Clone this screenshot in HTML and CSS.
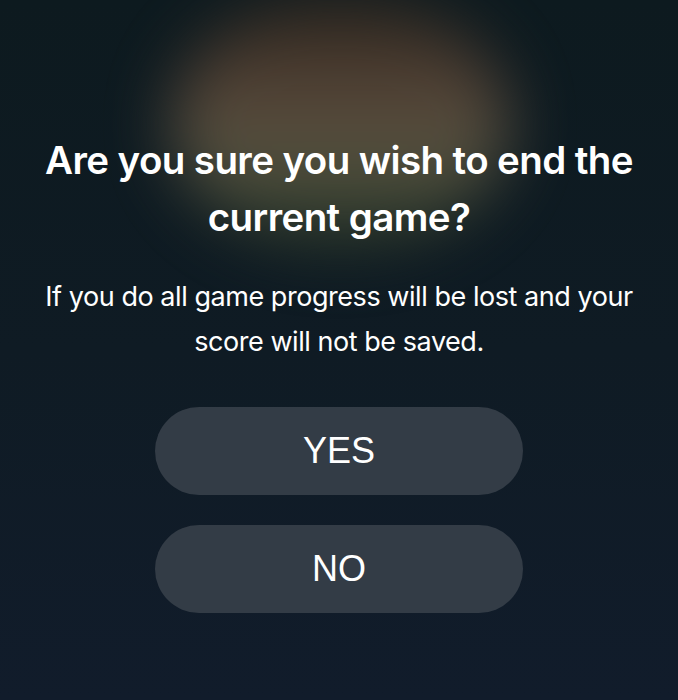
FILE: index.html
```html
<!DOCTYPE html>
<html>
<head>
<meta charset="utf-8">
<link rel="stylesheet" href="styles.css">
</head>
<body>
<div class="screen">
  <div class="glow"></div>
  <div class="dialog">
    <h1 class="title">Are you sure you wish to end the current game?</h1>
    <p class="message">If you do all game progress will be lost and your score will not be saved.</p>
    <div class="actions">
      <button class="btn">YES</button>
      <button class="btn">NO</button>
    </div>
  </div>
</div>
</body>
</html>
```

FILE: styles.css
```css
html, body {
  margin: 0;
  padding: 0;
  width: 678px;
  height: 700px;
  overflow: hidden;
}
.screen {
  position: relative;
  width: 678px;
  height: 700px;
  background:
    linear-gradient(180deg, #0d1a1f 0%, #0f1b24 50%, #111c2b 100%);
  overflow: hidden;
}
.glow {
  position: absolute;
  left: 170px;
  top: -5px;
  width: 340px;
  height: 255px;
  border-radius: 50%;
  background: linear-gradient(180deg, #2a231b 0%, #45362a 20%, #58483a 42%, #5a5542 62%, #3c4432 82%, #1c2a24 100%);
  filter: blur(32px);
  opacity: 0.95;
}
.dialog {
  position: relative;
  display: flex;
  flex-direction: column;
  align-items: center;
  padding-top: 132px;
}
.title {
  margin: 0;
  width: 640px;
  text-align: center;
  color: #ffffff;
  font-family: Inter, "Noto Sans", sans-serif;
  font-weight: 600;
  font-size: 38.5px;
  line-height: 57px;
  letter-spacing: -0.6px;
}
.message {
  margin: 28px 0 0;
  width: 620px;
  text-align: center;
  color: #ffffff;
  font-family: Inter, "Noto Sans", sans-serif;
  font-weight: 400;
  font-size: 27px;
  line-height: 45px;
  letter-spacing: -0.45px;
}
.actions {
  display: flex;
  flex-direction: column;
  gap: 30px;
  margin-top: 43px;
}
.btn {
  width: 368px;
  height: 88px;
  border: none;
  border-radius: 44px;
  background: #333c46;
  color: #ffffff;
  font-family: "Liberation Sans", Arial, sans-serif;
  font-size: 36px;
  padding: 0;
}
```
